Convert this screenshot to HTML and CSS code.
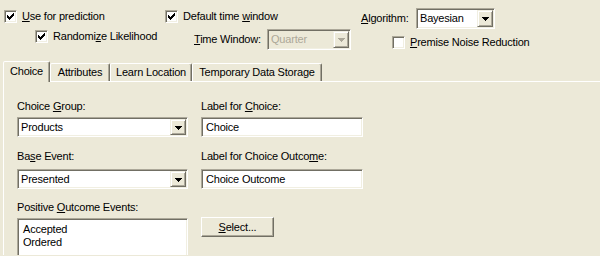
FILE: index.html
```html
<!DOCTYPE html>
<html>
<head>
<meta charset="utf-8">
<link rel="stylesheet" href="styles.css">
</head>
<body>
<div class="top">
  <div class="col c1">
    <label class="chk"><span class="box"><svg width="7" height="7" viewBox="0 0 7 7" shape-rendering="crispEdges"><path d="M0 2h1v3h-1zM1 3h1v3h-1zM2 4h1v3h-1zM3 3h1v3h-1zM4 2h1v3h-1zM5 1h1v3h-1zM6 0h1v3h-1z" fill="#000"/></svg></span><span><u>U</u>se for prediction</span></label>
    <label class="chk sub1"><span class="box"><svg width="7" height="7" viewBox="0 0 7 7" shape-rendering="crispEdges"><path d="M0 2h1v3h-1zM1 3h1v3h-1zM2 4h1v3h-1zM3 3h1v3h-1zM4 2h1v3h-1zM5 1h1v3h-1zM6 0h1v3h-1z" fill="#000"/></svg></span><span>Randomi<u>z</u>e Likelihood</span></label>
  </div>
  <div class="col c2">
    <label class="chk"><span class="box"><svg width="7" height="7" viewBox="0 0 7 7" shape-rendering="crispEdges"><path d="M0 2h1v3h-1zM1 3h1v3h-1zM2 4h1v3h-1zM3 3h1v3h-1zM4 2h1v3h-1zM5 1h1v3h-1zM6 0h1v3h-1z" fill="#000"/></svg></span><span>Default time <u>w</u>indow</span></label>
    <div class="field sub2">
      <span class="lbl lbl-tw"><u>T</u>ime Window:</span>
      <div class="combo disabled w-tw"><span class="val">Quarter</span><span class="dbtn"><svg width="7" height="4" viewBox="0 0 7 4" shape-rendering="crispEdges"><path d="M0 0h7v1h-7zM1 1h5v1h-5zM2 2h3v1h-3zM3 3h1v1h-1z" fill="#aca899"/></svg></span></div>
    </div>
  </div>
  <div class="col c3">
    <div class="field">
      <span class="lbl lbl-alg"><u>A</u>lgorithm:</span>
      <div class="combo w-alg"><span class="val">Bayesian</span><span class="dbtn"><svg width="7" height="4" viewBox="0 0 7 4" shape-rendering="crispEdges"><path d="M0 0h7v1h-7zM1 1h5v1h-5zM2 2h3v1h-3zM3 3h1v1h-1z" fill="#000"/></svg></span></div>
    </div>
    <label class="chk sub3"><span class="box"></span><span><u>P</u>remise Noise Reduction</span></label>
  </div>
</div>

<div class="tabbar">
  <div class="tab sel t1">Choice</div>
  <div class="tab t2">Attributes</div>
  <div class="tab t3">Learn Location</div>
  <div class="tab t4">Temporary Data Storage</div>
</div>

<div class="panel">
  <div class="grid">
    <div class="plbl">Choice <u>G</u>roup:</div>
    <div class="plbl">Label for <u>C</u>hoice:</div>
    <div class="combo pctl"><span class="val">Products</span><span class="dbtn"><svg width="7" height="4" viewBox="0 0 7 4" shape-rendering="crispEdges"><path d="M0 0h7v1h-7zM1 1h5v1h-5zM2 2h3v1h-3zM3 3h1v1h-1z" fill="#000"/></svg></span></div>
    <div class="tbox pctl">Choice</div>
    <div class="plbl g2">Ba<u>s</u>e Event:</div>
    <div class="plbl g2">Label for Choice Outco<u>m</u>e:</div>
    <div class="combo pctl2"><span class="val">Presented</span><span class="dbtn"><svg width="7" height="4" viewBox="0 0 7 4" shape-rendering="crispEdges"><path d="M0 0h7v1h-7zM1 1h5v1h-5zM2 2h3v1h-3zM3 3h1v1h-1z" fill="#000"/></svg></span></div>
    <div class="tbox pctl2">Choice Outcome</div>
    <div class="plbl g3">Positive <u>O</u>utcome Events:</div>
    <div class="plbl g3"></div>
    <div class="listbox">
      <div>Accepted</div>
      <div>Ordered</div>
    </div>
    <div class="btncell"><div class="button"><u>S</u>elect...</div></div>
  </div>
</div>
</body>
</html>
```

FILE: styles.css
```css
* { box-sizing: border-box; }
html, body { margin: 0; padding: 0; }
body {
  width: 600px;
  height: 256px;
  overflow: hidden;
  background: #ece9d8;
  font-family: "Liberation Sans", Arial, sans-serif;
  font-size: 11px;
  line-height: 13px;
  letter-spacing: -0.2px;
  color: #000;
}
u { text-decoration: underline; text-underline-offset: 1px; }

.top { display: flex; height: 61px; }
.col { display: flex; flex-direction: column; align-items: flex-start; }
.c1 { width: 161px; margin-left: 4px; padding-top: 10px; gap: 7px; }
.c2 { width: 196px; padding-top: 10px; gap: 6px; }
.c3 { padding-top: 8px; gap: 7px; }
.sub1 { margin-left: 31px; }
.sub2 { margin-left: 29px; }
.sub3 { margin-left: 31px; }

.chk { display: flex; align-items: center; gap: 5px; height: 13px; white-space: nowrap; }
.box {
  width: 13px; height: 13px; flex: none;
  background: #fff;
  border: 1px solid;
  border-color: #aca899 #fff #fff #aca899;
  box-shadow: inset 1px 1px #716f64, inset -1px -1px #f1efe2;
  display: flex; align-items: center; justify-content: center;
}
.box svg { display: block; }

.field { display: flex; align-items: center; }
.lbl { white-space: nowrap; flex: none; }
.lbl-tw { width: 73px; }
.lbl-alg { width: 55px; }

.combo {
  display: flex;
  height: 21px;
  border: 1px solid;
  border-color: #aca899 #fff #fff #aca899;
  box-shadow: inset 1px 1px #716f64, inset -1px -1px #f1efe2;
  background: #fff;
  padding: 1px;
}
.combo .val { flex: 1; padding-left: 2px; display: flex; align-items: center; white-space: nowrap; overflow: hidden; }
.combo .dbtn {
  width: 16px; flex: none;
  background: #ece9d8;
  border: 1px solid;
  border-color: #f1efe2 #716f64 #716f64 #f1efe2;
  box-shadow: inset 1px 1px #fff, inset -1px -1px #aca899;
  display: flex; align-items: center; justify-content: center;
}
.combo .dbtn svg { display: block; margin-top: 1px; }
.combo.disabled { background: #ece9d8; color: #aca899; }
.w-tw { width: 84px; }
.w-alg { width: 79px; }

.tabbar {
  display: flex;
  align-items: flex-end;
  height: 20px;
  padding-left: 3px;
  position: relative;
  z-index: 1;
}
.tab {
  height: 18px;
  border: 1px solid;
  border-bottom: none;
  border-color: #fff #716f64 transparent #fff;
  border-radius: 2px 2px 0 0;
  box-shadow: inset -1px 0 #aca899;
  background: #ece9d8;
  display: flex;
  justify-content: center;
  padding-top: 2px;
  white-space: nowrap;
}
.tab.sel { height: 21px; margin-bottom: -1px; padding-top: 3px; }
.t1 { width: 47px; }
.t2 { width: 60px; }
.t3 { width: 82px; }
.t4 { width: 130px; }

.panel {
  margin-left: 3px;
  border-top: 1px solid #fff;
  border-left: 1px solid #fff;
  padding: 18px 0 0 13px;
}
.grid {
  display: grid;
  grid-template-columns: 171px 162px;
  column-gap: 13px;
  align-items: start;
}
.plbl { height: 13px; white-space: nowrap; }
.pctl { margin-top: 4px; height: 20px; }
.pctl2 { margin-top: 6px; height: 20px; }
.g2 { margin-top: 13px; }
.g3 { margin-top: 12px; }

.tbox {
  border: 1px solid;
  border-color: #aca899 #fff #fff #aca899;
  box-shadow: inset 1px 1px #716f64, inset -1px -1px #f1efe2;
  background: #fff;
  padding: 0 4px;
  display: flex; align-items: center;
}

.listbox {
  margin-top: 4px;
  height: 37px;
  border: 1px solid;
  border-bottom: none;
  border-color: #aca899 #fff #fff #aca899;
  box-shadow: inset 1px 1px #716f64, inset -1px 0 #f1efe2;
  background: #fff;
  padding: 4px 5px;
}
.btncell { margin-top: 3px; }
.button {
  width: 73px; height: 20px;
  border: 1px solid;
  border-color: #fff #716f64 #716f64 #fff;
  box-shadow: inset -1px -1px #aca899;
  background: #ece9d8;
  display: flex; align-items: center; justify-content: center;
}
```
